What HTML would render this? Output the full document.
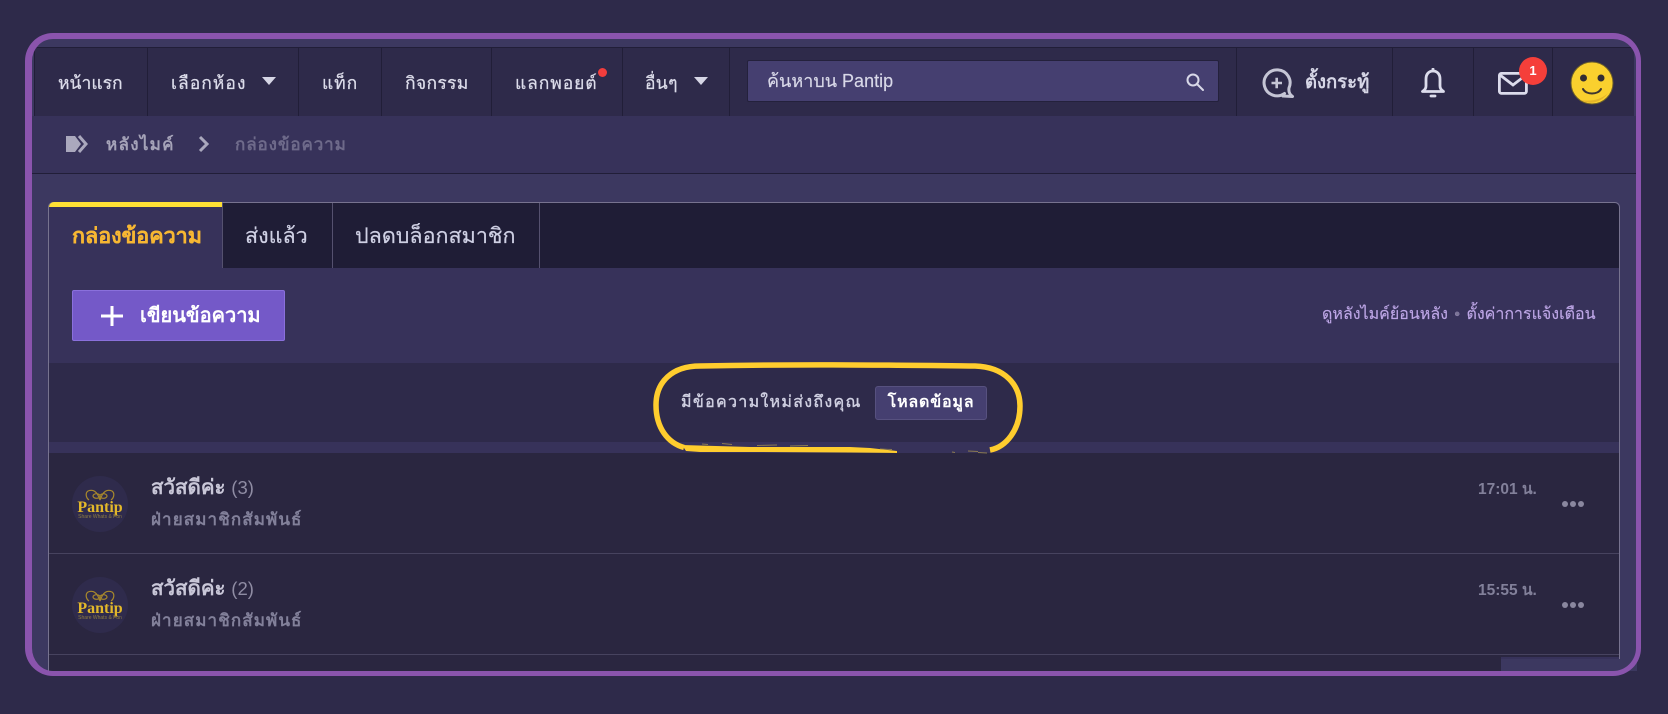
<!DOCTYPE html>
<html lang="th"><head><meta charset="utf-8"><title>กล่องข้อความ</title>
<style>
*{box-sizing:border-box}
html,body{margin:0;padding:0}
body{width:1668px;height:714px;overflow:hidden;background:#2e2a4a;position:relative;font-family:"Liberation Sans","Noto Sans CJK SC",sans-serif;}
.a{position:absolute;white-space:nowrap}
.sep{position:absolute;top:47px;width:1px;height:69px;background:#211e38}
.nav{font-size:17.5px;color:#dcdcea;top:71px;line-height:24px;-webkit-text-stroke:.25px #dcdcea}
.tri{position:absolute;top:77px;width:0;height:0;border-left:7px solid transparent;border-right:7px solid transparent;border-top:8px solid #d6d6e6}
.tab{font-size:21.5px;top:222px;line-height:28px;-webkit-text-stroke:.2px currentColor}
.title{font-size:20.5px;font-weight:bold;color:#c9c7d8;left:151px;line-height:24px}
.title span{font-size:18.5px;font-weight:normal;color:#8f8ca3}
.sub{font-size:17px;letter-spacing:1.1px;font-weight:bold;color:#82809a;left:151px;line-height:22px}
.time{font-size:15.5px;font-weight:bold;color:#82809a;left:1478px;line-height:20px}
.dot{position:absolute;width:6px;height:6px;border-radius:50%;background:#8a879f}
.av{position:absolute;left:72px;width:56px;height:56px;border-radius:50%;background:#2f2b4c}
</style></head><body>

<!-- inner frame backgrounds -->
<div class="a" style="left:30px;top:36px;width:1608px;height:636px;background:#3c3860;border-radius:24px"></div>
<div class="a" style="left:34px;top:47px;width:1600px;height:69px;background:#2e2a4a;border-top:1px solid #211e38"></div>
<div class="a" style="left:30px;top:116px;width:1606px;height:58px;background:#37325a;border-bottom:1px solid #211e38"></div>

<!-- nav -->
<div class="sep" style="left:34px"></div><div class="sep" style="left:147px"></div><div class="sep" style="left:298px"></div><div class="sep" style="left:381px"></div><div class="sep" style="left:491px"></div><div class="sep" style="left:622px"></div><div class="sep" style="left:729px"></div><div class="sep" style="left:1236px"></div><div class="sep" style="left:1392px"></div><div class="sep" style="left:1473px"></div><div class="sep" style="left:1552px"></div>
<div class="a nav" style="left:58px">หน้าแรก</div>
<div class="a nav" style="left:171px;letter-spacing:1px">เลือกห้อง</div><div class="tri" style="left:262px"></div>
<div class="a nav" style="left:322px;letter-spacing:.9px">แท็ก</div>
<div class="a nav" style="left:405px;letter-spacing:.3px">กิจกรรม</div>
<div class="a nav" style="left:515px;letter-spacing:.9px">แลกพอยต์</div>
<div class="a" style="left:598px;top:68px;width:9px;height:9px;border-radius:50%;background:#f23d3d"></div>
<div class="a nav" style="left:645px;letter-spacing:.3px">อื่นๆ</div><div class="tri" style="left:694px"></div>

<!-- search -->
<div class="a" style="left:747px;top:60px;width:472px;height:42px;background:#453f70;border:1px solid #24213c;border-radius:2px"></div>
<div class="a" style="left:767px;top:69px;font-size:18px;line-height:24px;color:#d8d8e8;-webkit-text-stroke:.15px #d8d8e8">ค้นหาบน Pantip</div>
<svg class="a" style="left:1185px;top:72px" width="20" height="20" viewBox="0 0 20 20" fill="none" stroke="#d8d8e8" stroke-width="2"><circle cx="8" cy="8" r="5.500"/><path d="M12 12l6 6" stroke-linecap="round"/></svg>

<!-- right nav icons -->
<svg class="a" style="left:1260px;top:66px" width="36" height="34" viewBox="0 0 36 34" fill="none" stroke="#c5c5d5" stroke-width="3"><path d="M24.500 27.500A13 13 0 1 1 29 22c-.5 3 0 6 3.500 8.500L23 30" stroke-linejoin="round" stroke-linecap="round"/><path d="M11.500 17h10.500M16.700 11.800v10.500" stroke-width="2.600"/></svg>
<div class="a" style="left:1305px;top:70px;font-size:18.500px;font-weight:bold;line-height:24px;color:#d6d6e6">ตั้งกระทู้</div>
<svg class="a" style="left:1420px;top:68px" width="26" height="30" viewBox="0 0 26 30" fill="none" stroke="#dcdcec" stroke-width="2.800"><path d="M13 3c-4.500 0-7 3.500-7 8v7c0 2.500-1 3.500-3.500 5.500h21C21 21.500 20 20.500 20 18v-7c0-4.500-2.500-8-7-8z" stroke-linejoin="round"/><path d="M11 28h4" stroke-linecap="round"/><path d="M13 1v2" stroke-linecap="round"/></svg>
<svg class="a" style="left:1498px;top:72px" width="30" height="23" viewBox="0 0 30 23" fill="none" stroke="#dcdcec" stroke-width="2.800"><rect x="1.400" y="1.400" width="27" height="20" rx="2"/><path d="M2 3l13 10L28 3"/></svg>
<div class="a" style="left:1519px;top:57px;width:28px;height:28px;border-radius:50%;background:#f53f3a;color:#fff;font-size:13px;font-weight:bold;line-height:27px;text-align:center">1</div>
<svg class="a" style="left:1570px;top:61px" width="44" height="44" viewBox="0 0 44 44"><circle cx="22" cy="22" r="21" fill="#fad02e" stroke="#6d5f2a" stroke-width="1"/><path d="M38 32A21 21 0 0 1 10 39c12 2 22-1 28-7z" fill="#e5b52a"/><circle cx="13.500" cy="17" r="3.500" fill="#332d33"/><circle cx="31" cy="17" r="3.500" fill="#332d33"/><path d="M13 28c3 6 15 6 18 0" fill="none" stroke="#3e3630" stroke-width="2" stroke-linecap="round"/></svg>

<!-- breadcrumb -->
<svg class="a" style="left:65px;top:135px" width="24" height="18" viewBox="0 0 24 18"><path d="M1 1h9l6 8-6 8H1z" fill="#aaa8bd"/><path d="M14 1l7 8-7 8" fill="none" stroke="#aaa8bd" stroke-width="3"/></svg>
<div class="a" style="left:106px;top:133px;font-size:17px;letter-spacing:1.300px;font-weight:bold;line-height:24px;color:#a5a3b8">หลังไมค์</div>
<svg class="a" style="left:197px;top:135px" width="14" height="18" viewBox="0 0 14 18"><path d="M3 2l7 7-7 7" fill="none" stroke="#aaa8bd" stroke-width="3"/></svg>
<div class="a" style="left:235px;top:133px;font-size:17px;letter-spacing:.9px;font-weight:bold;line-height:24px;color:#6e6a8a">กล่องข้อความ</div>

<!-- panel -->
<div class="a" style="left:48px;top:202px;width:1572px;height:470px;background:#37325a;border:1px solid #77738f;border-bottom:0;border-radius:5px 5px 0 0"></div>
<div class="a" style="left:222px;top:203px;width:1397px;height:65px;background:#1f1d36;border-radius:0 5px 0 0"></div>
<div class="a" style="left:49px;top:202px;width:173px;height:5px;background:#ffe135;border-radius:5px 0 0 0"></div>
<div class="a" style="left:222px;top:203px;width:1px;height:65px;background:#55516f"></div>
<div class="a" style="left:332px;top:203px;width:1px;height:65px;background:#55516f"></div>
<div class="a" style="left:539px;top:203px;width:1px;height:65px;background:#55516f"></div>
<div class="a tab" style="left:72px;color:#f7b733;font-weight:bold">กล่องข้อความ</div>
<div class="a tab" style="left:245px;color:#cfd0e4">ส่งแล้ว</div>
<div class="a tab" style="left:355px;color:#cfd0e4">ปลดบล็อกสมาชิก</div>

<!-- compose -->
<div class="a" style="left:72px;top:290px;width:213px;height:51px;background:#7459c8;border:1px solid #8a70dc;border-radius:2px"></div>
<svg class="a" style="left:100px;top:304px" width="24" height="24" viewBox="0 0 24 24"><path d="M12 2v20M1 12h22" stroke="#fff" stroke-width="3"/></svg>
<div class="a" style="left:140px;top:303px;font-size:20px;font-weight:bold;line-height:26px;color:#fff">เขียนข้อความ</div>
<div class="a" style="left:1322px;top:304px;font-size:16px;line-height:22px;color:#bda6e6;-webkit-text-stroke:.15px #bda6e6">ดูหลังไมค์ย้อนหลัง <span style="color:#7b7596;margin:0 2px">•</span> ตั้งค่าการแจ้งเตือน</div>

<!-- new message band -->
<div class="a" style="left:49px;top:363px;width:1570px;height:79px;background:#2e2a4a"></div>
<div class="a" style="left:681px;top:392px;font-size:16px;letter-spacing:1.300px;line-height:22px;color:#d0d0e2;-webkit-text-stroke:.4px #d0d0e2">มีข้อความใหม่ส่งถึงคุณ</div>
<div class="a" style="left:875px;top:386px;width:112px;height:34px;background:#453f70;border:1px solid #57517f;border-radius:3px;color:#fff;font-size:16px;letter-spacing:.8px;font-weight:bold;line-height:31px;text-align:center">โหลดข้อมูล</div>

<!-- rows -->
<div class="a" style="left:49px;top:453px;width:1570px;height:204px;background:#2a2640"></div>
<div class="a" style="left:49px;top:553px;width:1570px;height:1px;background:#47435f"></div>
<div class="a" style="left:49px;top:654px;width:1570px;height:1px;background:#47435f"></div>
<div class="a" style="left:49px;top:655px;width:1452px;height:16px;background:#2a2640"></div>
<div class="a" style="left:1501px;top:659px;width:136px;height:12px;background:#3c3860"></div>

<div class="av" style="top:476px"><svg width="56" height="56" viewBox="0 0 56 56" style="display:block"><path d="M28 24c-3-9-7-11-12-9-3 2-2 7 1 9M28 24c3-9 7-11 12-9 3 2 2 7-1 9M21 20a3 2 0 1 0 7 0 3 2 0 1 0-7 0zM28 20a3 2 0 1 0 7 0 3 2 0 1 0-7 0z" fill="none" stroke="#a8882c" stroke-width="1.200"/><text x="28" y="36" text-anchor="middle" font-family="Liberation Serif,serif" font-size="16" font-weight="bold" fill="#e3b82a">Pantip</text><text x="28" y="42" text-anchor="middle" font-family="Liberation Sans,sans-serif" font-size="5" fill="#8d7c43">Share Whats &amp; Fun</text></svg></div>
<div class="a title" style="top:476px">สวัสดีค่ะ <span>(3)</span></div>
<div class="a sub" style="top:509px">ฝ่ายสมาชิกสัมพันธ์</div>
<div class="a time" style="top:480px">17:01 น.</div>
<div class="dot" style="left:1562px;top:501px"></div><div class="dot" style="left:1570px;top:501px"></div><div class="dot" style="left:1578px;top:501px"></div>

<div class="av" style="top:577px"><svg width="56" height="56" viewBox="0 0 56 56" style="display:block"><path d="M28 24c-3-9-7-11-12-9-3 2-2 7 1 9M28 24c3-9 7-11 12-9 3 2 2 7-1 9M21 20a3 2 0 1 0 7 0 3 2 0 1 0-7 0zM28 20a3 2 0 1 0 7 0 3 2 0 1 0-7 0z" fill="none" stroke="#a8882c" stroke-width="1.200"/><text x="28" y="36" text-anchor="middle" font-family="Liberation Serif,serif" font-size="16" font-weight="bold" fill="#e3b82a">Pantip</text><text x="28" y="42" text-anchor="middle" font-family="Liberation Sans,sans-serif" font-size="5" fill="#8d7c43">Share Whats &amp; Fun</text></svg></div>
<div class="a title" style="top:577px">สวัสดีค่ะ <span>(2)</span></div>
<div class="a sub" style="top:610px">ฝ่ายสมาชิกสัมพันธ์</div>
<div class="a time" style="top:581px">15:55 น.</div>
<div class="dot" style="left:1562px;top:602px"></div><div class="dot" style="left:1570px;top:602px"></div><div class="dot" style="left:1578px;top:602px"></div>

<!-- yellow scribble -->
<svg class="a" style="left:0;top:0" width="1668" height="714" viewBox="0 0 1668 714" fill="none">
<path d="M684 447.500C668 443 656 428 656 405C656 382 672 366 700 366C800 364 880 365 975 366C1005 367 1020 385 1020 406C1020 430 1006 447 990 450" stroke="#ffcd2e" stroke-width="5.500" stroke-linecap="butt"/>
<path d="M682 445L750 447L850 447L870 448L897 451L897 453L850 452.500L760 452L700 452L686 451z" fill="#ffcd2e"/>
<path d="M702 444l6 .5M722 443.500l10 1M757 445.500l20-.5M790 446l18-.5M880 449l12 .5M952 452l3 .5M968 451l10 .5M978 452.500l9 .5" stroke="#a89450" stroke-width=".9" opacity=".75"/>
</svg>

<!-- purple frame -->
<div class="a" style="left:25px;top:33px;width:1616px;height:643px;border:solid #8a54ad;border-width:6px 5.500px 5.500px 7px;border-radius:28px"></div>
</body></html>
